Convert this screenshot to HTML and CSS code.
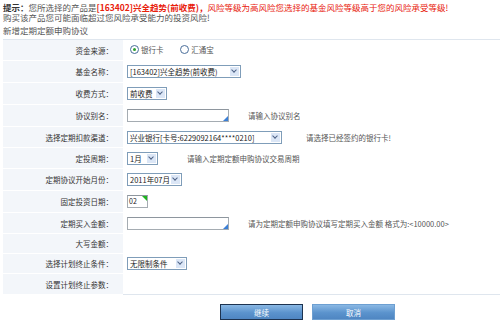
FILE: index.html
```html
<!DOCTYPE html>
<html lang="zh-CN">
<head>
    <meta charset="UTF-8">
    <title>新增定期定额申购协议</title>
    <link rel="stylesheet" href="styles.css">
</head>
<body>
    <div class="notice">
        <p><b>提示：</b>您所选择的产品是<span class="hot">[163402]兴全趋势(前收费)，</span><span class="warn">风险等级为高风险您选择的基金风险等级高于您的风险承受等级!</span></p>
        <p>购买该产品您可能面临超过您风险承受能力的投资风险!</p>
        <p class="title">新增定期定额申购协议</p>
    </div>

    <table class="plan">
        <tr class="r21">
            <th>资金来源：</th>
            <td>
                <label class="radio"><span class="dot on"></span>银行卡</label>
                <label class="radio"><span class="dot"></span>汇通宝</label>
            </td>
        </tr>
        <tr class="r22">
            <th>基金名称：</th>
            <td><span class="sel w113">[163402]兴全趋势(前收费)<i class="arr"></i></span></td>
        </tr>
        <tr class="r22">
            <th>收费方式：</th>
            <td><span class="sel w40">前收费<i class="arr"></i></span></td>
        </tr>
        <tr class="r22">
            <th>协议别名：</th>
            <td><span class="inp w102"><i class="corner blue"></i></span><span class="hint">请输入协议别名</span></td>
        </tr>
        <tr class="r21">
            <th>选择定期扣款渠道：</th>
            <td><span class="sel w155">兴业银行[卡号:6229092164****0210]<i class="arr"></i></span><span class="hint h2">请选择已经签约的银行卡!</span></td>
        </tr>
        <tr class="r21">
            <th>定投周期：</th>
            <td><span class="sel w31">1月<i class="arr"></i></span><span class="hint h3">请输入定期定额申购协议交易周期</span></td>
        </tr>
        <tr class="r22">
            <th>定期协议开始月份：</th>
            <td><span class="sel w55">2011年07月<i class="arr"></i></span></td>
        </tr>
        <tr class="r22">
            <th>固定投资日期：</th>
            <td><span class="inp w21">02<i class="corner green"></i></span></td>
        </tr>
        <tr class="r21">
            <th>定期买入金额：</th>
            <td><span class="inp w102"><i class="corner blue"></i></span><span class="hint">请为定期定额申购协议填写定期买入金额 格式为:&lt;10000.00&gt;</span></td>
        </tr>
        <tr class="r20">
            <th>大写金额：</th>
            <td></td>
        </tr>
        <tr class="r20">
            <th>选择计划终止条件：</th>
            <td><span class="sel w60">无限制条件<i class="arr"></i></span></td>
        </tr>
        <tr class="r21">
            <th>设置计划终止参数：</th>
            <td></td>
        </tr>
    </table>

    <div class="actions">
        <button type="button" class="btn main">继续</button>
        <button type="button" class="btn">取消</button>
    </div>
</body>
</html>
```

FILE: styles.css
```css
body {
    margin: 0;
    padding: 2px 3px;
    background: #fff;
    font-family: "Noto Sans CJK SC", "DejaVu Sans", sans-serif;
    font-size: 7.5px;
    color: #555;
}

.notice {
    font-size: 8.5px;
}

.notice p {
    margin: 0;
    line-height: 10px;
}

.notice b {
    color: #333;
}

.notice .hot {
    color: #e8200c;
    font-weight: bold;
}

.notice .warn {
    color: #e8200c;
}

.notice .title {
    margin-top: 3px;
}

.plan {
    width: 497px;
    margin-top: 4px;
    border-collapse: collapse;
    border-top: 1px solid #dfe6ee;
    border-bottom: 1px solid #dfe6ee;
}

.plan th {
    width: 110px;
    padding: 0 10px 0 0;
    text-align: right;
    font-weight: normal;
    color: #333;
    background: #f3f6fa;
    border-bottom: 1px solid #fff;
    white-space: nowrap;
}

.plan td {
    padding: 0 0 0 4px;
    white-space: nowrap;
    color: #555;
}

.r20 { height: 20px; }
.r21 { height: 21px; }
.r22 { height: 22px; }

.radio {
    display: inline-flex;
    align-items: center;
    margin: 0 12px 0 3px;
    color: #555;
}

.dot {
    display: inline-block;
    width: 7px;
    height: 7px;
    margin-right: 2px;
    border: 1px solid #4a6e9a;
    border-radius: 50%;
    background: #fff;
    position: relative;
}

.dot.on::after {
    content: "";
    position: absolute;
    left: 2px;
    top: 2px;
    width: 3px;
    height: 3px;
    border-radius: 50%;
    background: #2da12d;
}

.sel,
.inp {
    display: inline-block;
    position: relative;
    box-sizing: border-box;
    height: 13px;
    line-height: 11px;
    padding-left: 2px;
    border: 1px solid #7f9db9;
    background: #fff;
    color: #222;
    vertical-align: middle;
    overflow: hidden;
}

.inp {
    border-color: #a5acb2;
    border-top-color: #8e969e;
    font-size: 7px;
    padding-left: 1px;
}

.arr {
    position: absolute;
    right: 1px;
    top: 1px;
    width: 9px;
    height: 9px;
    background: #dbe6f6;
}

.arr::after {
    content: "";
    position: absolute;
    left: 2px;
    top: 1px;
    width: 3px;
    height: 3px;
    border-right: 1.5px solid #4d6185;
    border-bottom: 1.5px solid #4d6185;
    transform: rotate(45deg);
}

.w21 { width: 21px; }
.w31 { width: 31px; }
.w40 { width: 40px; }
.w55 { width: 55px; }
.w60 { width: 60px; }
.w102 { width: 102px; }
.w113 { width: 114px; }
.w155 { width: 155px; }

.corner {
    position: absolute;
    width: 0;
    height: 0;
}

.corner.blue {
    right: 0;
    bottom: 0;
    border-left: 5px solid transparent;
    border-bottom: 5px solid #3b7fd6;
}

.corner.green {
    right: 0;
    top: 0;
    border-left: 5px solid transparent;
    border-top: 5px solid #1fb41f;
}

.hint {
    margin-left: 19px;
    color: #555;
    vertical-align: middle;
}

.hint.h2 {
    margin-left: 24px;
}

.hint.h3 {
    margin-left: 29px;
}

.actions {
    display: flex;
    gap: 9px;
    padding: 9px 0 0 217px;
}

.btn {
    width: 83px;
    height: 16px;
    padding: 0;
    font-family: inherit;
    font-size: 7.5px;
    color: #fff;
    border: 1px solid #6d9fd1;
    background: linear-gradient(#8ab8e4, #5b93cd 55%, #4f86c2);
    cursor: pointer;
}

.btn.main {
    border-color: #1d3350;
}
```
